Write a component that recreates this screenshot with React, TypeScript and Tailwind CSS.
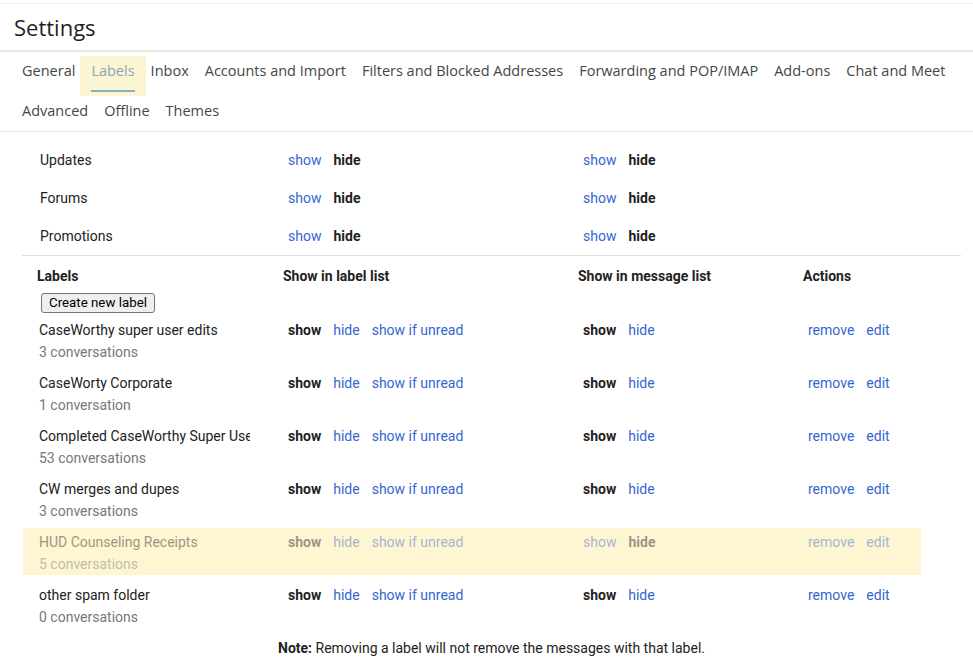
import type { ReactNode } from "react";

type LabelRow = {
  name: string;
  count: string;
  dimmed?: boolean;
};

const TABS_ROW_1 = [
  "General",
  "Labels",
  "Inbox",
  "Accounts and Import",
  "Filters and Blocked Addresses",
  "Forwarding and POP/IMAP",
  "Add-ons",
  "Chat and Meet",
];

const TABS_ROW_2 = ["Advanced", "Offline", "Themes"];

const CATEGORIES = ["Updates", "Forums", "Promotions"];

const LABELS: LabelRow[] = [
  { name: "CaseWorthy super user edits", count: "3 conversations" },
  { name: "CaseWorty Corporate", count: "1 conversation" },
  { name: "Completed CaseWorthy Super User Edits", count: "53 conversations" },
  { name: "CW merges and dupes", count: "3 conversations" },
  { name: "HUD Counseling Receipts", count: "5 conversations", dimmed: true },
  { name: "other spam folder", count: "0 conversations" },
];

const sans = "font-['Open_Sans',sans-serif]";

function Tab({ label }: { label: string }) {
  if (label === "Labels") {
    return (
      <div className="-mx-[3px] h-10 bg-[#fdf4d2] px-[3px]">
        <div className="flex h-10 flex-col px-2 pt-[5px]">
          <span className="leading-5 text-[#8fa6b8]">{label}</span>
          <span className="mt-[9px] h-[2px] w-full bg-[#87afc6]" />
        </div>
      </div>
    );
  }
  return <div className="h-10 px-2 pt-[5px] leading-5 text-[#444746]">{label}</div>;
}

function Link({ children }: { children: ReactNode }) {
  return <span className="cursor-pointer text-[#3566d0]">{children}</span>;
}

function Bold({ children }: { children: ReactNode }) {
  return <span className="font-bold text-[#222]">{children}</span>;
}

function Choices({ children }: { children: ReactNode }) {
  return <div className="flex gap-3 pl-[10px] leading-5">{children}</div>;
}

export default function App() {
  return (
    <div className="min-h-[668px] bg-white font-['Roboto',sans-serif] text-sm text-[#222]">
      <header className="mt-[3px] h-[49px] border-t border-[#eceded] border-b-2 border-b-[#e6e6e6] pl-[14px] pt-[9px]">
        <h1 className={`${sans} text-[22px] leading-7 text-[#1f1f1f]`}>Settings</h1>
      </header>

      <nav className={`${sans} border-b border-[#e8e8e8] pl-[14px] pt-[4px] text-[14.5px] font-medium`}>
        <div className="flex">
          {TABS_ROW_1.map((t) => (
            <Tab key={t} label={t} />
          ))}
        </div>
        <div className="flex h-[35px]">
          {TABS_ROW_2.map((t) => (
            <Tab key={t} label={t} />
          ))}
        </div>
      </nav>

      <main className="ml-[22px] w-[939px] pt-[9px]">
        {CATEGORIES.map((c) => (
          <div key={c} className="grid h-[38px] grid-cols-[256px_295px_225px_1fr] items-center">
            <div className="pl-[18px] leading-5">{c}</div>
            <Choices>
              <Link>show</Link>
              <Bold>hide</Bold>
            </Choices>
            <Choices>
              <Link>show</Link>
              <Bold>hide</Bold>
            </Choices>
            <div />
          </div>
        ))}

        <div className="border-t border-[#e0e0e0] pt-[10px]">
          <div className="grid grid-cols-[256px_295px_225px_1fr] font-bold leading-5">
            <div className="pl-[15px]">Labels</div>
            <div className="pl-[5px]">Show in label list</div>
            <div className="pl-[5px]">Show in message list</div>
            <div className="pl-[5px]">Actions</div>
          </div>
          <div className="pl-[19px] pt-[6px]">
            <button className="h-5 rounded-[3px] border border-[#767676] bg-[#efefef] px-[7px] text-[13.3px] leading-[18px] text-black">
              Create new label
            </button>
          </div>
        </div>

        <div className="w-[899px] pt-[3px]">
          {LABELS.map((l) => (
            <div
              key={l.name}
              className={`mb-[6px] ml-px grid h-[47px] grid-cols-[255px_295px_225px_1fr] pt-[4px] ${l.dimmed ? "bg-[#fef6d3]" : ""}`}
            >
              <div className={`pl-[16px] leading-5 ${l.dimmed ? "opacity-45" : ""}`}>
                <div className="w-[211px] overflow-hidden whitespace-nowrap">{l.name}</div>
                <div className="mt-[2px] text-[#777]">{l.count}</div>
              </div>
              <div className={l.dimmed ? "opacity-45" : ""}>
                <Choices>
                  <Bold>show</Bold>
                  <Link>hide</Link>
                  <Link>show if unread</Link>
                </Choices>
              </div>
              <div className={l.dimmed ? "opacity-45" : ""}>
                <Choices>
                  {l.dimmed ? <Link>show</Link> : <Bold>show</Bold>}
                  {l.dimmed ? <Bold>hide</Bold> : <Link>hide</Link>}
                </Choices>
              </div>
              <div className={l.dimmed ? "opacity-45" : ""}>
                <Choices>
                  <Link>remove</Link>
                  <Link>edit</Link>
                </Choices>
              </div>
            </div>
          ))}
        </div>

        <p className="pt-[4px] text-center leading-5">
          <span className="font-bold">Note:</span> Removing a label will not remove the messages with that label.
        </p>
      </main>
    </div>
  );
}
